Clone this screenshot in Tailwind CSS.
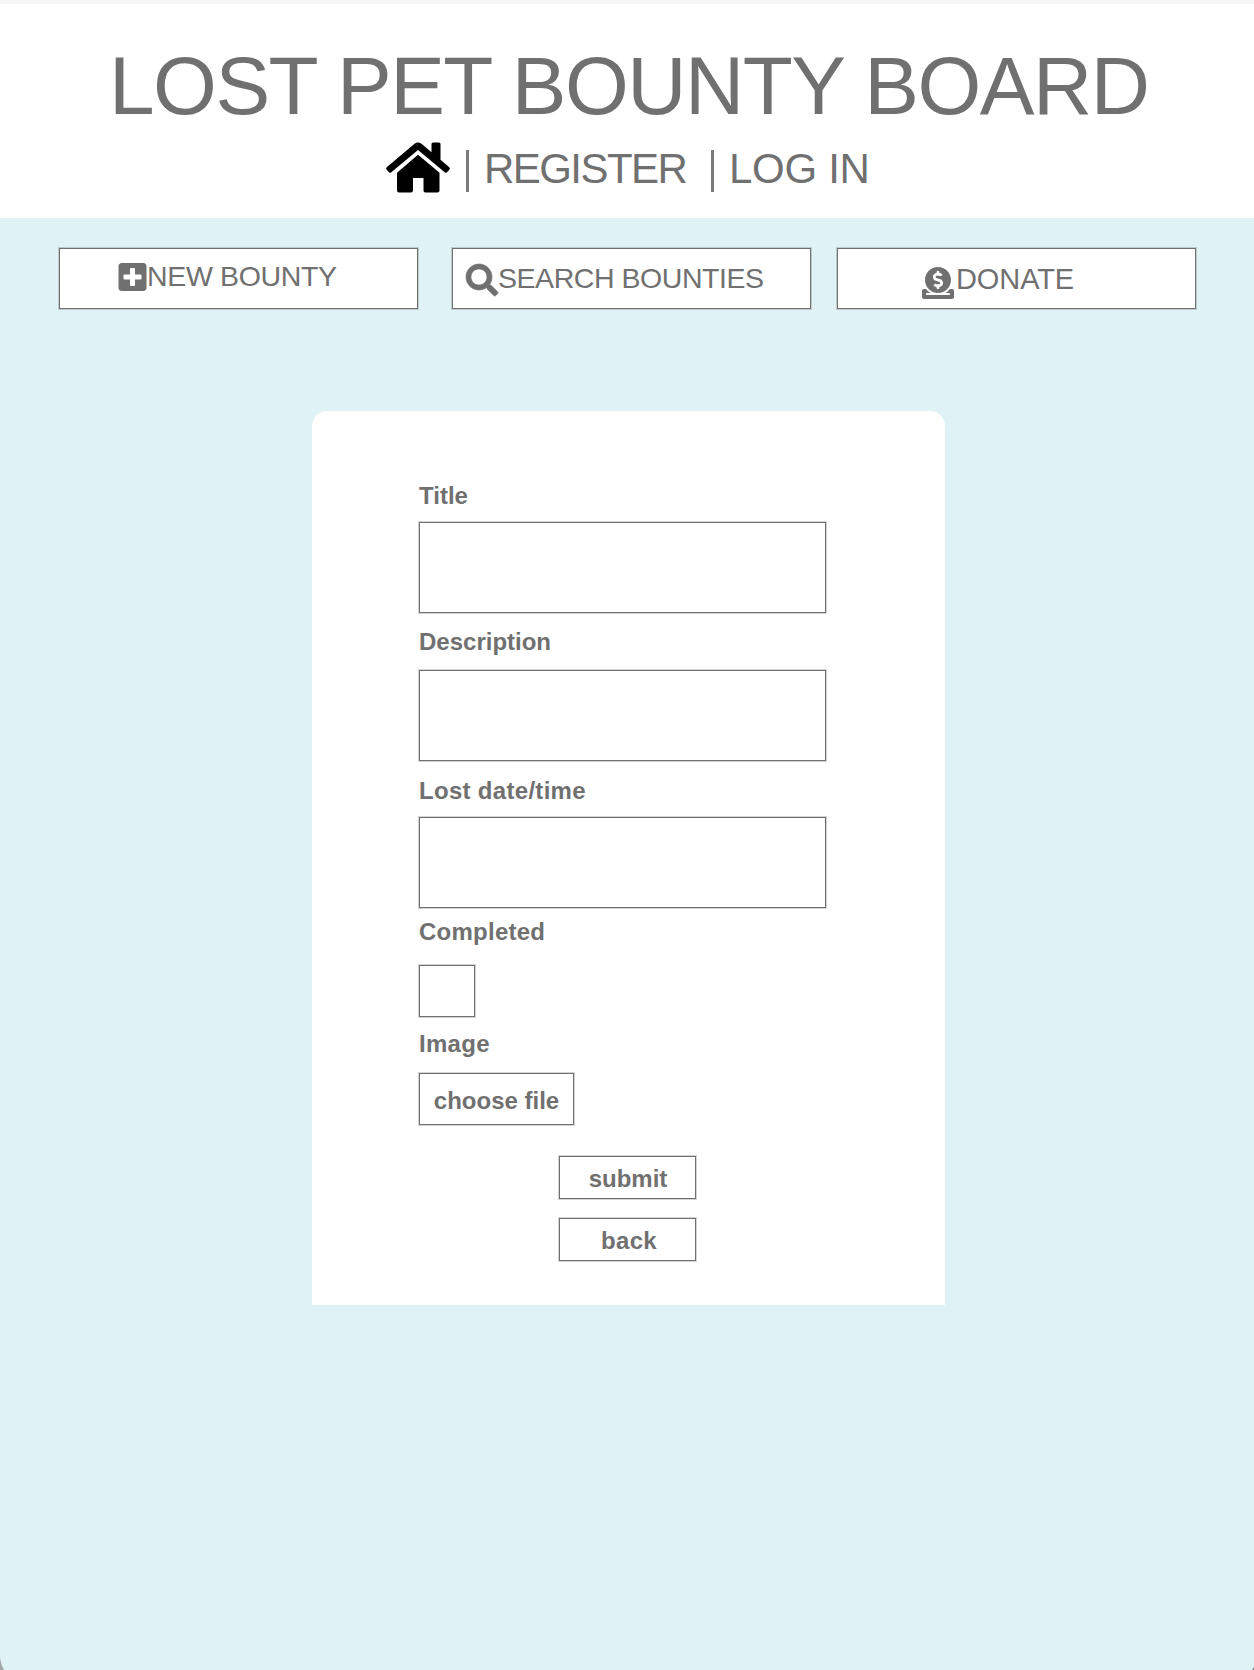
<!DOCTYPE html>
<html lang="en">
<head>
<meta charset="utf-8">
<title>Lost Pet Bounty Board</title>
<script src="https://cdn.jsdelivr.net/npm/@tailwindcss/browser@4"></script>
</head>
<body class="bg-[#dff2f6]">
<div class="relative h-[1670px] w-[1254px] overflow-hidden bg-[#dff2f6] font-['Liberation_Sans',Arial,sans-serif] text-[#707070]">
  <header class="h-[218px] border-t-4 border-[#f6f6f6] bg-white pt-[42px]">
    <h1 class="pl-[109px] text-[82px] leading-[80px] tracking-[-1.5px] whitespace-nowrap">LOST PET BOUNTY BOARD</h1>
    <nav class="mt-4 flex h-[52px] items-start pl-[386px] text-[42px] leading-[54px] whitespace-nowrap">
      <a href="#" aria-label="Home" class="block w-16 shrink-0">
        <svg class="block h-[51px] w-16" viewBox="0 0 64 51" fill="#000">
          <path d="M1 25 28.500 1.800Q32 -1 35.500 1.800L45.500 10.300V2Q45.500 .500 47 .500H53Q54.500 .500 54.500 2V17.800L63 25Q64.500 26.300 63.300 27.800L61 30.200Q60 31.300 58.700 30.200L32 8 5.300 30.200Q4 31.300 3 30.200L.700 27.800Q-.500 26.300 1 25Z"/>
          <path d="M32 12.800 53.500 30.800V48.500Q53.500 50.500 51.500 50.500H39.500Q37.500 50.500 37.500 48.500V36H27V48.500Q27 50.500 25 50.500H13Q11 50.500 11 48.500V30.800Z"/>
        </svg>
      </a>
      <span class="mt-2 ml-4 h-[42px] w-[3px] bg-[#7b7b7b]"></span>
      <a href="#" class="ml-[15px] w-[208px] tracking-[-1.55px]">REGISTER</a>
      <span class="mt-2 ml-[19px] h-[42px] w-[3px] bg-[#7b7b7b]"></span>
      <a href="#" class="ml-[15px] tracking-[-0.3px]">LOG IN</a>
    </nav>
  </header>

  <section class="flex pt-[30px] pl-[59px] text-[28px] leading-8 whitespace-nowrap">
    <button class="flex h-[61px] w-[359px] items-start border border-[#707070] bg-white pl-[58px] shadow-[0_0_0_1px_rgba(112,112,112,0.3)]">
      <svg class="mt-[11.500px] h-8 w-[29px] shrink-0" viewBox="0 0 448 512" fill="currentColor"><path d="M400 32H48C21.500 32 0 53.500 0 80v352c0 26.500 21.500 48 48 48h352c26.500 0 48-21.500 48-48V80c0-26.500-21.500-48-48-48zm-32 252c0 6.600-5.400 12-12 12h-92v92c0 6.600-5.400 12-12 12h-56c-6.600 0-12-5.400-12-12v-92H92c-6.600 0-12-5.400-12-12v-56c0-6.600 5.400-12 12-12h92v-92c0-6.600 5.400-12 12-12h56c6.600 0 12 5.400 12 12v92h92c6.600 0 12 5.400 12 12v56z"/></svg>
      <span class="mt-[11px] text-[28.500px] tracking-[-0.35px]">NEW BOUNTY</span>
    </button>
    <button class="ml-[34px] flex h-[61px] w-[359px] items-start border border-[#707070] bg-white pl-[13px] shadow-[0_0_0_1px_rgba(112,112,112,0.3)]">
      <svg class="mt-[15px] size-8 shrink-0 overflow-visible" viewBox="0 0 512 512" fill="currentColor" stroke="currentColor" stroke-width="10"><path d="M505 442.700L405.300 343c-4.500-4.500-10.600-7-17-7H372c27.600-35.300 44-79.700 44-128C416 93.100 322.900 0 208 0S0 93.100 0 208s93.100 208 208 208c48.300 0 92.700-16.400 128-44v16.300c0 6.400 2.500 12.500 7 17l99.700 99.700c9.400 9.400 24.600 9.400 33.900 0l28.300-28.300c9.400-9.400 9.400-24.600.1-34zM208 336c-70.700 0-128-57.200-128-128 0-70.700 57.200-128 128-128 70.700 0 128 57.200 128 128 0 70.700-57.200 128-128 128z"/></svg>
      <span class="mt-[13px] text-[28.500px] tracking-[-0.45px]">SEARCH BOUNTIES</span>
    </button>
    <button class="ml-[26px] flex h-[61px] w-[359px] items-start border border-[#707070] bg-white pl-[84px] shadow-[0_0_0_1px_rgba(112,112,112,0.3)]">
      <svg class="mt-[18px] size-8 shrink-0" viewBox="0 0 512 512" fill="currentColor"><path d="M256 416c114.900 0 208-93.100 208-208S370.900 0 256 0 48 93.100 48 208s93.100 208 208 208zM233.800 97.400V80.600c0-9.200 7.400-16.600 16.600-16.600h11.100c9.200 0 16.600 7.400 16.600 16.600v17c15.500.8 30.500 6.100 43 15.400 5.600 4.100 6.200 12.300 1.200 17.100L306 145.600c-3.800 3.700-9.500 3.800-14 1-5.400-3.400-11.400-5.100-17.800-5.100h-38.900c-9 0-16.300 8.200-16.300 18.300 0 8.200 5 15.500 12.100 17.600l62.300 18.700c25.700 7.700 43.700 32.400 43.700 60.100 0 34-26.400 61.500-59.100 62.400v16.800c0 9.200-7.400 16.600-16.600 16.600h-11.100c-9.200 0-16.600-7.400-16.600-16.600v-17c-15.500-.8-30.500-6.100-43-15.400-5.600-4.100-6.200-12.300-1.200-17.100l16.300-15.500c3.800-3.700 9.500-3.800 14-1 5.400 3.400 11.400 5.100 17.800 5.100h38.900c9 0 16.300-8.200 16.300-18.300 0-8.200-5-15.500-12.100-17.600l-62.300-18.700c-25.700-7.700-43.700-32.400-43.700-60.100.1-34 26.400-61.500 59.100-62.400zM480 352h-32.500c-19.600 26-44.600 47.700-73 64h63.800c5.300 0 9.600 3.600 9.600 8v16c0 4.400-4.300 8-9.600 8H73.600c-5.300 0-9.600-3.600-9.600-8v-16c0-4.400 4.300-8 9.600-8h63.800c-28.400-16.300-53.300-38-73-64H32c-17.700 0-32 14.300-32 32v96c0 17.700 14.300 32 32 32h448c17.700 0 32-14.300 32-32v-96c0-17.700-14.300-32-32-32z"/></svg>
      <span class="mt-[14px] ml-[2px] text-[29px] tracking-[-0.1px]">DONATE</span>
    </button>
  </section>

  <form class="mt-[102px] ml-[312px] flex h-[894px] w-[633px] flex-col items-start rounded-t-[15px] bg-white pt-[71px] pl-[107px] text-[24px] leading-7 font-bold">
    <label for="title">Title</label>
    <input id="title" class="mt-3 h-[91px] w-[407px] border border-[#707070] px-3 shadow-[0_0_0_1px_rgba(112,112,112,0.3)]">
    <label for="description" class="mt-[15px]">Description</label>
    <input id="description" class="mt-[14px] h-[91px] w-[407px] border border-[#707070] px-3 shadow-[0_0_0_1px_rgba(112,112,112,0.3)]">
    <label for="lost" class="mt-4 tracking-[0.3px]">Lost date/time</label>
    <input id="lost" class="mt-3 h-[91px] w-[407px] border border-[#707070] px-3 shadow-[0_0_0_1px_rgba(112,112,112,0.3)]">
    <label for="completed" class="mt-[10px] tracking-[0.25px]">Completed</label>
    <input id="completed" type="checkbox" class="mt-[19px] h-[52px] w-[56px] appearance-none border border-[#707070] shadow-[0_0_0_1px_rgba(112,112,112,0.3)]">
    <label class="mt-[13px] tracking-[0.3px]">Image</label>
    <button type="button" class="mt-[15px] h-[52px] w-[155px] border border-[#707070] pt-[3px] whitespace-nowrap shadow-[0_0_0_1px_rgba(112,112,112,0.3)]">choose file</button>
    <button type="button" class="mt-[31px] ml-[140px] h-[43px] w-[137px] border border-[#707070] pt-0.5 pl-px shadow-[0_0_0_1px_rgba(112,112,112,0.3)]">submit</button>
    <button type="button" class="mt-[19px] ml-[140px] h-[43px] w-[137px] border border-[#707070] pt-0.5 pl-[3px] tracking-[0.35px] shadow-[0_0_0_1px_rgba(112,112,112,0.3)]">back</button>
  </form>

  <svg class="absolute bottom-0 left-0 h-3 w-1" viewBox="0 0 4 12"><path d="M0 0Q1 7 4 12H0Z" fill="#a3a5a6"/></svg>
  <svg class="absolute right-0 bottom-0 h-[3px] w-0.5" viewBox="0 0 2 3"><path d="M2 0V3H0Z" fill="#8f9192"/></svg>
</div>
</body>
</html>
